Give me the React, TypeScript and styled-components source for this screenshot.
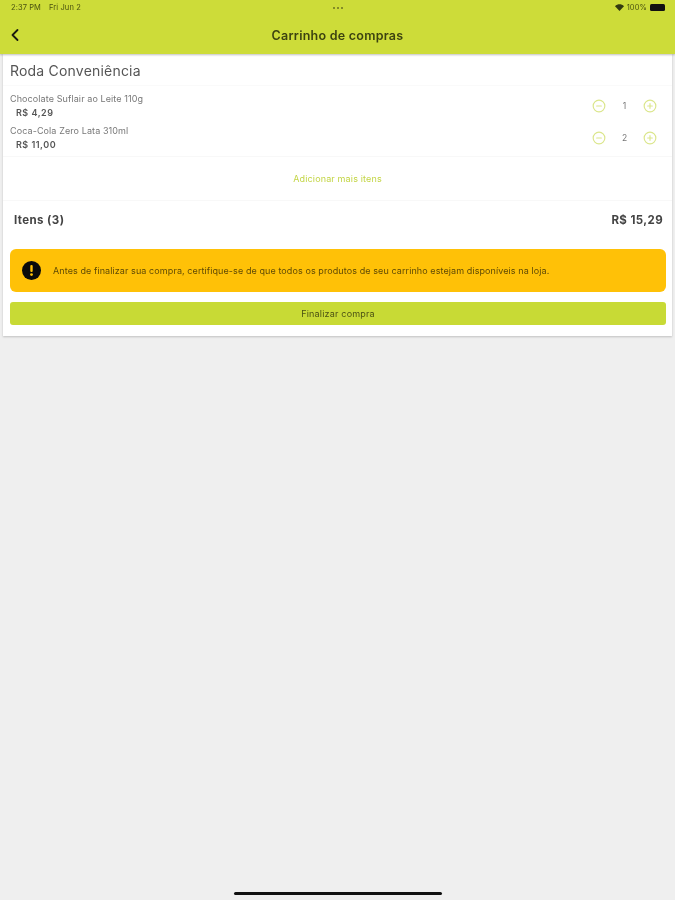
import React from 'react';
import styled, { createGlobalStyle } from 'styled-components';
import { ChevronLeft, CircleMinus, CirclePlus } from 'lucide-react';

const GlobalStyle = createGlobalStyle`
    html, body {
        margin: 0;
        padding: 0;
        background-color: #efefef;
    }
    * {
        box-sizing: border-box;
    }
`;

const Page = styled.div`
    width: 675px;
    height: 900px;
    overflow: hidden;
    display: flex;
    flex-direction: column;
    font-family: 'Inter', sans-serif;
    background-color: #efefef;
    filter: blur(0.35px);
`;

const Header = styled.header`
    height: 54px;
    flex-shrink: 0;
    background-color: #cddc39;
    box-shadow: 0 1px 2px rgba(0, 0, 0, 0.25);
    position: relative;
    z-index: 1;
`;

const StatusBar = styled.div`
    height: 15px;
    padding: 0 10px 0 11px;
    display: flex;
    align-items: center;
    justify-content: space-between;
    font-size: 7.5px;
    letter-spacing: 0.1px;
    color: #4a5210;
`;

const StatusGroup = styled.div`
    display: flex;
    align-items: center;
    gap: 8px;
    width: 100px;
`;

const StatusRight = styled(StatusGroup)`
    justify-content: flex-end;
    gap: 3px;
`;

const Dots = styled.div`
    display: flex;
    gap: 2px;
`;

const Dot = styled.span`
    width: 2px;
    height: 2px;
    border-radius: 50%;
    background-color: #6b7320;
`;

const Battery = styled.div`
    width: 15px;
    height: 7px;
    border-radius: 1.5px;
    background-color: #111;
`;

const NavBar = styled.div`
    height: 39px;
    padding: 0 5px;
    display: grid;
    grid-template-columns: 100px 1fr 100px;
    align-items: center;
`;

const BackButton = styled.button`
    width: 20px;
    padding: 0;
    border: none;
    background: none;
    color: #1a1a10;
    display: flex;
`;

const Title = styled.h1`
    margin: 0;
    padding-top: 1px;
    text-align: center;
    font-size: 12.5px;
    font-weight: 600;
    letter-spacing: 0.25px;
    color: #3c4210;
`;

const Card = styled.main`
    margin: 0 3px;
    height: 282px;
    flex-shrink: 0;
    background-color: #fff;
    box-shadow: 0 1px 2px rgba(0, 0, 0, 0.2);
    display: flex;
    flex-direction: column;
`;

const StoreName = styled.h2`
    margin: 0;
    height: 32px;
    padding: 8px 7px 0;
    font-size: 14px;
    font-weight: 400;
    line-height: 18px;
    letter-spacing: 0.2px;
    color: #555;
    border-bottom: 1px solid #fafafa;
`;

const ItemList = styled.ul`
    margin: 0;
    padding: 4px 7px 0;
    list-style: none;
    height: 71px;
    border-bottom: 1px solid #f8f8f8;
`;

const Item = styled.li`
    height: 32px;
    display: flex;
    align-items: center;
    justify-content: space-between;
`;

const ItemInfo = styled.div`
    display: flex;
    flex-direction: column;
`;

const ItemName = styled.span`
    font-size: 9px;
    line-height: 13px;
    letter-spacing: 0.1px;
    color: #777;
`;

const ItemPrice = styled.span`
    font-size: 9px;
    font-weight: 600;
    line-height: 15px;
    letter-spacing: 0.5px;
    padding-left: 6px;
    color: #555;
`;

const Stepper = styled.div`
    display: grid;
    grid-template-columns: 14px 37px 14px;
    align-items: center;
    justify-items: center;
    margin: 0 8px 1px 0;
    color: #dbe68c;
`;

const Quantity = styled.span`
    font-size: 8.5px;
    color: #777;
`;

const AddMore = styled.a`
    height: 44px;
    display: flex;
    align-items: center;
    justify-content: center;
    font-size: 9px;
    letter-spacing: 0.15px;
    color: #c3d545;
    border-bottom: 1px solid #f8f8f8;
`;

const Totals = styled.div`
    height: 37px;
    padding: 0 9px 0 11px;
    display: flex;
    align-items: center;
    justify-content: space-between;
    font-size: 11.5px;
    font-weight: 700;
    letter-spacing: 0.4px;
    color: #444;
`;

const Warning = styled.div`
    margin: 11px 6px 0 7px;
    height: 43px;
    padding: 0 12px;
    display: flex;
    align-items: center;
    gap: 12px;
    border-radius: 6px;
    background-color: #ffc107;
    font-size: 9px;
    letter-spacing: 0.09px;
    color: #5f4a06;
`;

const FinishButton = styled.button`
    margin: 10px 6px 0 7px;
    height: 23px;
    border: none;
    border-radius: 3px;
    background-color: #c8da35;
    font-family: inherit;
    font-size: 9px;
    letter-spacing: 0.2px;
    color: #4c5214;
`;

const HomeIndicator = styled.div`
    width: 208px;
    height: 3px;
    margin: auto auto 5px;
    border-radius: 2px;
    background-color: #111;
`;

const items = [
    { name: 'Chocolate Suflair ao Leite 110g', price: 'R$ 4,29', quantity: 1 },
    { name: 'Coca-Cola Zero Lata 310ml', price: 'R$ 11,00', quantity: 2 },
];

const App: React.FC = () => (
    <Page>
        <GlobalStyle />
        <Header>
            <StatusBar>
                <StatusGroup>
                    <span>2:37 PM</span>
                    <span>Fri Jun 2</span>
                </StatusGroup>
                <Dots>
                    <Dot />
                    <Dot />
                    <Dot />
                </Dots>
                <StatusRight>
                    <svg width="9" height="7" viewBox="0 0 9 7">
                        <path d="M0 2.2 C2.6 -0.4 6.4 -0.4 9 2.2 L4.5 7 Z" fill="#333a10" />
                    </svg>
                    <span>100%</span>
                    <Battery />
                </StatusRight>
            </StatusBar>
            <NavBar>
                <BackButton>
                    <ChevronLeft size={20} strokeWidth={2.2} />
                </BackButton>
                <Title>Carrinho de compras</Title>
            </NavBar>
        </Header>
        <Card>
            <StoreName>Roda Conveniência</StoreName>
            <ItemList>
                {items.map((item) => (
                    <Item key={item.name}>
                        <ItemInfo>
                            <ItemName>{item.name}</ItemName>
                            <ItemPrice>{item.price}</ItemPrice>
                        </ItemInfo>
                        <Stepper>
                            <CircleMinus size={14} strokeWidth={2} />
                            <Quantity>{item.quantity}</Quantity>
                            <CirclePlus size={14} strokeWidth={2} />
                        </Stepper>
                    </Item>
                ))}
            </ItemList>
            <AddMore>Adicionar mais itens</AddMore>
            <Totals>
                <span>Itens (3)</span>
                <span>R$ 15,29</span>
            </Totals>
            <Warning>
                <svg width="19" height="19" viewBox="0 0 19 19">
                    <circle cx="9.5" cy="9.5" r="9.5" fill="#0b0b0b" />
                    <rect x="8.3" y="4" width="2.4" height="7" rx="1" fill="#ffc107" />
                    <circle cx="9.5" cy="13.6" r="1.4" fill="#ffc107" />
                </svg>
                <span>Antes de finalizar sua compra, certifique-se de que todos os produtos de seu carrinho estejam disponíveis na loja.</span>
            </Warning>
            <FinishButton>Finalizar compra</FinishButton>
        </Card>
        <HomeIndicator />
    </Page>
);

export default App;
